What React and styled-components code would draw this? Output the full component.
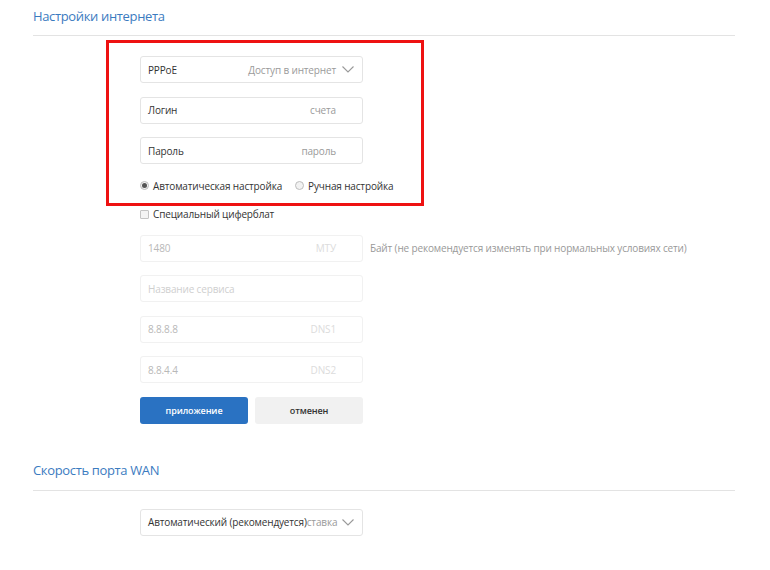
import React from "react";
import styled, { createGlobalStyle } from "styled-components";

const Global = createGlobalStyle`
  html, body { margin: 0; padding: 0; background: #fff; }
  body { font-family: "Open Sans", "Liberation Sans", sans-serif; color: #333; }
  * { box-sizing: border-box; }
`;

const Page = styled.div`
  position: relative;
  width: 770px;
  height: 570px;
  overflow: hidden;
  padding: 0 35px 0 33px;
`;

const Section = styled.section`
  display: flex;
  flex-direction: column;
  margin-top: ${(p) => p.$top || 0}px;
`;

const Title = styled.h2`
  margin: 0;
  padding: 6px 0 ${(p) => p.$pb || 9}px;
  font-size: 13px;
  letter-spacing: -0.35px;
  line-height: 20px;
  font-weight: 400;
  color: #3b7bbf;
  border-bottom: 1px solid #e3e3e3;
`;

const Form = styled.div`
  display: flex;
  flex-direction: column;
  padding-left: 107px;
  padding-top: ${(p) => p.$pt || 20}px;
  gap: 13.5px;
`;

const Row = styled.div`
  display: flex;
  align-items: center;
  gap: 7px;
  margin-top: ${(p) => p.$mt || 0}px;
`;

const Field = styled.div`
  width: 223px;
  height: 27px;
  flex-shrink: 0;
  border: 1px solid ${(p) => (p.$disabled ? "#f1f1f1" : "#e4e4e4")};
  border-radius: 3px;
  display: flex;
  align-items: center;
  justify-content: space-between;
  padding: 0 ${(p) => (p.$select ? "8px" : "26px")} 0 7px;
  font-size: 10px;
  letter-spacing: -0.15px;
  background: #fff;
`;

const Value = styled.span`
  color: ${(p) => (p.$disabled ? "#b8b8b8" : "#333")};
  white-space: nowrap;
`;

const Placeholder = styled.span`
  color: #cfcfcf;
`;

const Hint = styled.span`
  color: ${(p) => (p.$disabled ? "#dcdcdc" : "#9a9a9a")};
  display: flex;
  align-items: center;
  gap: 6px;
  white-space: nowrap;
`;

const InlineHint = styled.span`
  color: #9a9a9a;
`;

const Note = styled.span`
  font-size: 10px;
  letter-spacing: -0.15px;
  color: #999;
  white-space: nowrap;
`;

const Options = styled.div`
  display: flex;
  align-items: center;
  height: 14px;
  margin-top: 1px;
  font-size: 10px;
  letter-spacing: -0.15px;
  color: #333;
`;

const Option = styled.label`
  display: flex;
  align-items: center;
  gap: 4px;
  margin-right: ${(p) => p.$mr || 0}px;
`;

const Radio = styled.span`
  width: 9px;
  height: 9px;
  border-radius: 50%;
  border: 1px solid #bdbdbd;
  background: #f2f2f2;
  display: inline-flex;
  align-items: center;
  justify-content: center;
  &::after {
    content: "";
    width: 5px;
    height: 5px;
    border-radius: 50%;
    background: ${(p) => (p.$checked ? "#555" : "transparent")};
  }
`;

const Check = styled.span`
  width: 9px;
  height: 9px;
  border: 1px solid #c4c4c4;
  border-radius: 1px;
  background: #f4f4f4;
`;

const CheckRow = styled(Options)`
  margin-top: 1px;
`;

const Button = styled.button`
  width: 108px;
  height: 27px;
  border: none;
  border-radius: 3px;
  font-family: inherit;
  font-size: 9px;
  font-weight: 600;
  letter-spacing: -0.1px;
  background: ${(p) => (p.$primary ? "#2a72c2" : "#f1f1f1")};
  color: ${(p) => (p.$primary ? "#fff" : "#333")};
  padding: 0;
`;

const Highlight = styled.div`
  position: absolute;
  left: 106px;
  top: 40px;
  width: 318px;
  height: 166px;
  border: 3px solid #ee1111;
  pointer-events: none;
`;

const Chevron = () => (
  <svg width="12" height="7" viewBox="0 0 12 7">
    <path d="M0.5 0.5 L6 6 L11.5 0.5" fill="none" stroke="#999" strokeWidth="1.1" />
  </svg>
);

export default function App() {
  return (
    <>
      <Global />
      <Page>
        <Section>
          <Title>Настройки интернета</Title>
          <Form>
            <Field $select>
              <Value>PPPoE</Value>
              <Hint>
                Доступ в интернет <Chevron />
              </Hint>
            </Field>
            <Field>
              <Value>Логин</Value>
              <Hint>счета</Hint>
            </Field>
            <Field>
              <Value>Пароль</Value>
              <Hint>пароль</Hint>
            </Field>
            <Options>
              <Option $mr={13}>
                <Radio $checked />
                Автоматическая настройка
              </Option>
              <Option>
                <Radio />
                Ручная настройка
              </Option>
            </Options>
            <CheckRow>
              <Option>
                <Check />
                Специальный циферблат
              </Option>
            </CheckRow>
            <Row>
              <Field $disabled>
                <Value $disabled>1480</Value>
                <Hint $disabled>МТУ</Hint>
              </Field>
              <Note>Байт (не рекомендуется изменять при нормальных условиях сети)</Note>
            </Row>
            <Field $disabled>
              <Placeholder>Название сервиса</Placeholder>
            </Field>
            <Field $disabled>
              <Value $disabled>8.8.8.8</Value>
              <Hint $disabled>DNS1</Hint>
            </Field>
            <Field $disabled>
              <Value $disabled>8.8.4.4</Value>
              <Hint $disabled>DNS2</Hint>
            </Field>
            <Row>
              <Button $primary>приложение</Button>
              <Button>отменен</Button>
            </Row>
          </Form>
        </Section>
        <Section $top={30}>
          <Title $pb={10}>Скорость порта WAN</Title>
          <Form $pt={18}>
            <Field $select>
              <Value>
                Автоматический (рекомендуется)<InlineHint>ставка</InlineHint>
              </Value>
              <Hint>
                <Chevron />
              </Hint>
            </Field>
          </Form>
        </Section>
        <Highlight />
      </Page>
    </>
  );
}
